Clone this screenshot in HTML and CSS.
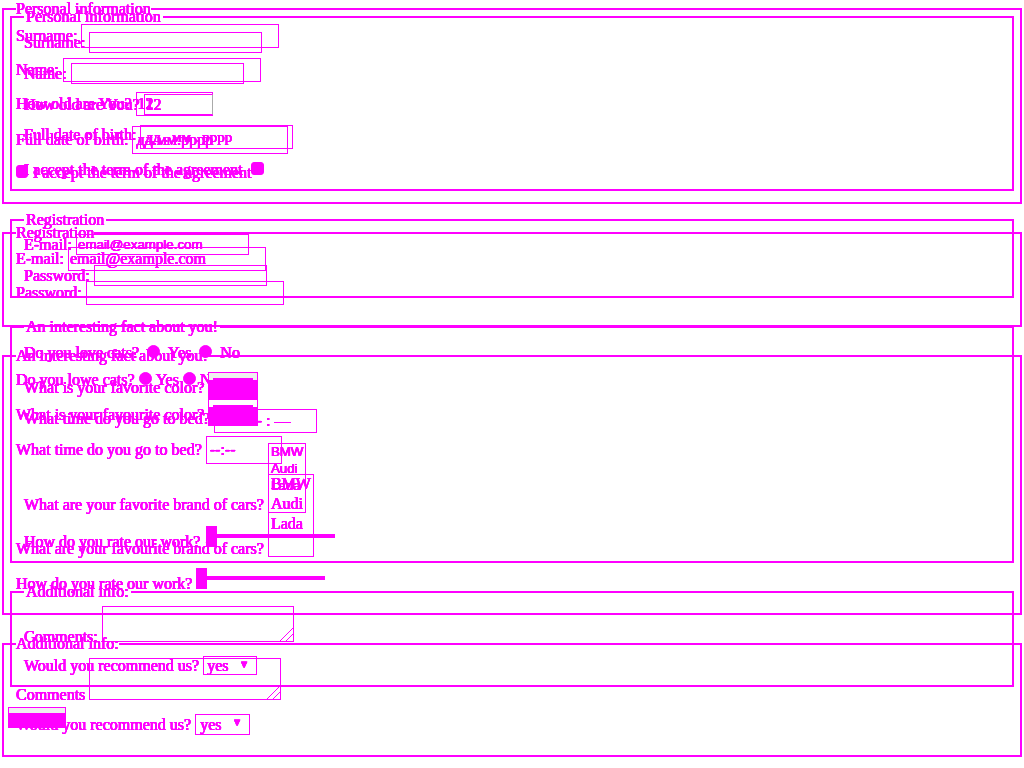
FILE: index.html
```html
<!DOCTYPE html>
<html lang="en">
<head>
<meta charset="utf-8">
<title>Personal information</title>
<link rel="stylesheet" href="styles.css">
</head>
<body>
<main class="stack">
  <form class="form wide">
    <fieldset class="first">
      <legend>Personal information</legend>
      <div class="row"><label for="a-surname">Surname:</label><input class="field" id="a-surname" type="text"></div>
      <div class="row"><label for="a-name">Name:</label><input class="field" id="a-name" type="text"></div>
      <div class="row"><label for="a-age">How old are You?</label><input class="field age" id="a-age" type="text" value="12"></div>
      <div class="row"><label for="a-date">Full date of birth:</label><input class="field date" id="a-date" type="text" value="дд.мм.рррр"></div>
      <div class="row"><input class="box" id="a-accept" type="checkbox"><label for="a-accept">I accept the term of the agreement</label></div>
    </fieldset>
    <fieldset>
      <legend>Registration</legend>
      <div class="row"><label for="a-mail">E-mail:</label><input class="field" id="a-mail" type="text" value="email@example.com"></div>
      <div class="row"><label for="a-pass">Password:</label><input class="field" id="a-pass" type="password"></div>
    </fieldset>
    <fieldset class="facts">
      <legend>An interesting fact about you!</legend>
      <div class="row cats"><span>Do you lowe cats?</span><input class="dot" id="a-yes" type="radio" name="cats-a"><label for="a-yes">Yes</label><input class="dot" id="a-no" type="radio" name="cats-a"><label for="a-no">No</label></div>
      <div class="row color-row"><label for="a-color">What is your favourite color?</label><input class="swatch plain" id="a-color" type="color" value="#ff00ff"></div>
      <div class="row"><label for="a-time">What time do you go to bed?</label><input class="field time" id="a-time" type="text" value="--:--"></div>
      <div class="row cars"><label for="a-cars">What are your favourite brand of cars?</label><select id="a-cars" size="4"><option>BMW</option><option>Audi</option><option>Lada</option></select></div>
      <div class="row low"><label for="a-rate">How do you rate our work?</label><input id="a-rate" type="range" value="0"></div>
    </fieldset>
    <fieldset>
      <legend>Additional info:</legend>
      <div class="row comments"><label for="a-com">Comments</label><textarea id="a-com"></textarea></div>
      <div class="row"><label for="a-rec">Would you recommend us?</label><span class="pick"><select id="a-rec"><option>yes</option><option>no</option></select></span></div>
    </fieldset>
  </form>

  <form class="form narrow">
    <fieldset class="first">
      <legend>Personal information</legend>
      <div class="row"><label for="b-surname">Surname:</label><input class="field" id="b-surname" type="text"></div>
      <div class="row"><label for="b-name">Name:</label><input class="field" id="b-name" type="text"></div>
      <div class="row"><label for="b-age">How old are You?</label><input class="field age" id="b-age" type="text" value="12"></div>
      <div class="row date-row"><label for="b-date">Full date of birth:</label><input class="field date" id="b-date" type="text" value="дд . мм . рррр"></div>
      <div class="row accept"><label for="b-accept">I accept the term of the agreement</label><input class="box" id="b-accept" type="checkbox"></div>
    </fieldset>
    <fieldset>
      <legend>Registration</legend>
      <div class="row"><label for="b-mail">E-mail:</label><input class="field" id="b-mail" type="text" value="email@example.com"></div>
      <div class="row"><label for="b-pass">Password:</label><input class="field" id="b-pass" type="password"></div>
    </fieldset>
    <fieldset class="facts">
      <legend>An interesting fact about you!</legend>
      <div class="row cats"><span>Do you love cats?</span><input class="dot" id="b-yes" type="radio" name="cats-b"><label for="b-yes">Yes</label><input class="dot" id="b-no" type="radio" name="cats-b"><label for="b-no">No</label></div>
      <div class="row color-row"><label for="b-color">What is your favorite color?</label><input class="swatch" id="b-color" type="color" value="#ff00ff"></div>
      <div class="row date-row"><label for="b-time">What time do you go to bed?</label><input class="field time" id="b-time" type="text" value="-- -- --- : ––"></div>
      <div class="row cars"><label for="b-cars">What are your favorite brand of cars?</label><select id="b-cars" size="4"><option>BMW</option><option>Audi</option><option>Lada</option></select></div>
      <div class="row low"><label for="b-rate">How do you rate our work?</label><input id="b-rate" type="range" value="0"></div>
    </fieldset>
    <fieldset>
      <legend>Additional info:</legend>
      <div class="row comments"><label for="b-com">Comments:</label><textarea id="b-com"></textarea></div>
      <div class="row"><label for="b-rec">Would you recommend us?</label><span class="pick"><select id="b-rec"><option>yes</option><option>no</option></select></span></div>
    </fieldset>
    <button class="submit" type="button">Submit</button>
  </form>
</main>
</body>
</html>
```
FILE: styles.css
```css
* { box-sizing: border-box; }

body {
  margin: 0;
  background: #fff;
  color: #f0f;
  font: 16px/18px "Liberation Serif", serif;
  text-shadow: 0 0 0 #f0f, 0 0 0 #f0f, 0 0 0 #f0f, 0 0 0 #f0f, 0 0 0 #f0f, 0 0 0 #f0f;
}

/* both forms share one cell, the narrow one on top */
.stack { display: grid; }
.form { grid-area: 1 / 1; min-width: 0; }
.wide { padding: 0 2px; }
.narrow { padding: 8px; }

fieldset {
  min-width: 0;
  margin: 0 0 20px;
  padding: 5px 12px 20px;
  border: 2px solid #f0f;
}
fieldset.first { padding-top: 6px; }
.narrow fieldset { margin: 0 2px 20px; padding-bottom: 10px; }
.facts.facts { padding-top: 6px; }
legend { padding: 0; }
.narrow legend { padding: 0 2px; }

.row {
  display: flex;
  align-items: center;
  gap: 4px;
  margin-bottom: 10px;
}
.row:last-child { margin-bottom: 0; }

input, select, textarea, button {
  margin: 0;
  border: 1px solid #f0f;
  border-radius: 0;
  background: transparent;
  color: #f0f;
  text-shadow: inherit;
}
.wide input, .wide select { font: inherit; }
.field { width: 198px; height: 24px; padding: 1px; }
.narrow .field { width: 173px; height: 21px; }
.wide .age { width: 77px; }
.narrow .age { width: 69px; border-right-color: #aaa; font: inherit; }
.wide .date { width: 156px; height: 28px; padding-left: 3px; }
.narrow .date { width: 153px; height: 24px; padding-left: 4px; font: 15px "Liberation Serif", serif; }
.wide .time { width: 76px; height: 28px; padding-left: 3px; }
.narrow .time { width: 103px; height: 24px; padding-left: 2px; font: inherit; }
.date-row { align-items: flex-start; }
.date-row label { padding-top: 1px; }

.box, .dot {
  appearance: none;
  flex: none;
  width: 13px;
  height: 13px;
  background: #f0f;
  border-radius: 3px;
}
.dot { border-radius: 50%; }
.accept { gap: 8px; min-height: 20px; align-items: flex-end; }
.narrow .accept { margin-bottom: 0; }
.narrow .accept .box { margin-bottom: 4px; }
.wide .cats .dot { margin-bottom: 3px; }
.narrow .cats { gap: 8px; min-height: 20px; align-items: flex-end; }
.narrow .cats .dot { margin-bottom: 4px; }
.wide .box { width: 12px; margin: 0 1px 3px 0; }

.color-row { align-items: flex-end; }
.color-row label { padding-bottom: 2px; }
.swatch {
  appearance: none;
  width: 50px;
  height: 27px;
  padding: 5px 4px 0;
  background: linear-gradient(#efefef 7px, #f0f 7px);
}
.plain { background: linear-gradient(#fff 7px, #f0f 7px); }
.swatch::-webkit-color-swatch-wrapper { padding: 0; }
.swatch::-webkit-color-swatch { border: 0; border-radius: 0; }

.cars { align-items: flex-start; min-height: 84px; }
.narrow .cars { min-height: 73px; }
.cars label { margin-top: auto; }
.narrow .cars label { padding-bottom: 2px; }
.cars select { width: 46px; height: 83px; padding: 0; overflow: hidden; }
.narrow .cars select { width: 38px; height: 70px; }
.cars option { min-height: 20px; padding: 0 2px; line-height: 18px; color: #f0f; }
.narrow .cars option { min-height: 17px; line-height: 17px; }

.low { align-items: flex-end; }
.narrow .low { gap: 6px; }
input[type="range"] {
  appearance: none;
  width: 129px;
  height: 21px;
  margin-bottom: 4px;
  border: 0;
  background: linear-gradient(#f0f, #f0f) 0 8px / 100% 4px no-repeat;
}
input[type="range"]::-webkit-slider-thumb {
  appearance: none;
  width: 11px;
  height: 21px;
  background: #f0f;
}

.comments { align-items: flex-start; min-height: 46px; }
.narrow .comments { min-height: 40px; }
.comments label { margin-top: auto; }
textarea { width: 192px; height: 42px; }
.narrow textarea { height: 36px; }
textarea::-webkit-resizer {
  background: linear-gradient(135deg, transparent 54%, #f0f 54%, #f0f 58%, transparent 58%, transparent 76%, #f0f 76%, #f0f 80%, transparent 80%);
}

.pick { position: relative; }
.pick select {
  display: block;
  appearance: none;
  width: 55px;
  height: 21px;
  padding: 0 4px;
  font: inherit;
}
.narrow .pick select { width: 54px; height: 19px; padding: 0 3px; }
.pick::after {
  content: "▼";
  position: absolute;
  right: 10px;
  top: 0;
  font: 8px/18px "DejaVu Sans", sans-serif;
  pointer-events: none;
}

.submit {
  display: block;
  width: 58px;
  height: 21px;
  padding: 0;
  background: linear-gradient(#efefef 5px, #f0f 5px);
}
```
